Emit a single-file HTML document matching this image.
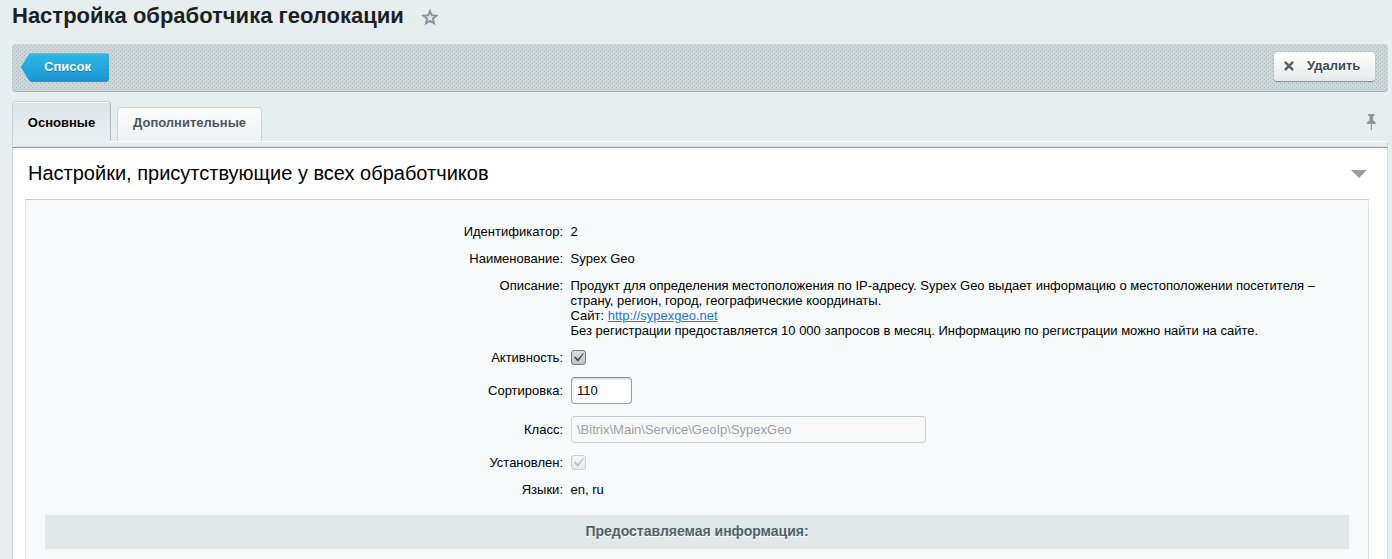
<!DOCTYPE html>
<html lang="ru">
<head>
<meta charset="utf-8">
<title>Настройка обработчика геолокации</title>
<style>
*{box-sizing:border-box;margin:0;padding:0}
html,body{width:1392px;height:559px;overflow:hidden}
body{background:#e7eef0;font-family:"Liberation Sans",Arial,sans-serif;font-size:13px;color:#000;position:relative}
.abs{position:absolute}
h1{position:absolute;left:12px;top:3px;font-size:22px;line-height:26px;font-weight:bold;color:#1c1f26;white-space:nowrap;letter-spacing:0}
.star{position:absolute;left:421px;top:8px;width:18px;height:18px}
.toolbar{position:absolute;left:12px;top:44px;width:1376px;height:48px;border-radius:4px;overflow:hidden;background:#cdd7da;border-bottom:1px solid #a5b0b4}
.toolbar svg{position:absolute;left:0;top:0}
.btn-list{position:absolute;left:21px;top:53px;width:88px;height:29px}
.btn-list span{position:absolute;left:0;top:0;width:100%;height:100%;line-height:27px;text-align:center;color:#fff;font-weight:bold;font-size:13px;padding-left:5px;text-shadow:0 1px 0 rgba(3,95,143,.6)}
.btn-del{position:absolute;left:1274px;top:52px;width:101px;height:29px;border-radius:4px;background:linear-gradient(#ffffff,#e4eaec);box-shadow:0 1px 1px rgba(0,0,0,.3),0 0 0 1px rgba(0,0,0,.04);color:#3f4b54;font-weight:bold;font-size:13px;line-height:29px;text-shadow:0 1px 0 #fff}
.btn-del b{position:absolute;left:33px;top:-1px;font-weight:bold}
.btn-del svg{position:absolute;left:10px;top:9px}
.tab1{position:absolute;left:12px;top:101px;width:99px;height:40px;border-radius:4px 4px 0 0;background:linear-gradient(#dbe3e6,#e9eff1);border:1px solid #cbd3d7;border-right-color:#b3bdc1;border-bottom:none;box-shadow:inset 0 1px 0 #fbfcfc;font-weight:bold;font-size:13px;color:#000;text-align:center;line-height:41px;text-shadow:0 1px 0 #fff}
.tab2{position:absolute;left:117px;top:107px;width:145px;height:34px;border-radius:4px 4px 0 0;background:linear-gradient(#fbfcfc,#eef2f3);border:1px solid #cdd5d8;border-bottom:none;font-weight:bold;font-size:13px;color:#4a5560;text-align:center;line-height:29px;text-shadow:0 1px 0 #fff}
.tabline{position:absolute;left:12px;top:141px;width:1376px;height:6px;background:#e9eff1;border-left:1px solid #cbd3d7;border-right:1px solid #cbd3d7}
.tabhl{position:absolute;left:110px;top:141px;width:1278px;height:1px;background:#fff}
.tabdark{position:absolute;left:12px;top:146px;width:1376px;height:2px;background:linear-gradient(#d6dde0 50%,#98a2a6 50%)}
.content{position:absolute;left:12px;top:148px;width:1376px;height:420px;background:#fff;border-left:1px solid #ccd4d8;border-right:1px solid #d3dadd}
.sect{position:absolute;left:28px;top:160px;font-size:20px;line-height:26px;color:#000;white-space:nowrap}
.tri{position:absolute;left:1351px;top:170px;width:0;height:0;border-left:8.5px solid transparent;border-right:8.5px solid transparent;border-top:8px solid #969fa3}
.panel{position:absolute;left:25px;top:199px;width:1344px;height:380px;background:#f5f9f9;border:1px solid #dbe3e7;border-top-color:#c4cfd4;box-shadow:inset 0 1px 0 #fafcfc}
.row{position:absolute;left:0;height:16px;line-height:16px;font-size:13px;white-space:nowrap}
.lab{position:absolute;right:829px;text-align:right;line-height:16px;white-space:nowrap;color:#000}
.val{position:absolute;left:570.5px;line-height:15px;white-space:nowrap;color:#000}
a{color:#2675d7;text-decoration:underline}
.cb{position:absolute;left:571px;width:15px;height:15px;border-radius:3px;border:1px solid #727c82;background:linear-gradient(#dcdfe1,#bcc1c4);box-shadow:0 0 0 1px rgba(255,255,255,.7)}
.cb.dis{border-color:#c9cfd2;background:linear-gradient(#f2f4f5,#e7eaeb)}
.inp{position:absolute;left:571px;top:377px;width:61px;height:27px;border:1px solid #949ea7;border-top-color:#848e98;border-radius:4px;background:#fff;box-shadow:inset 0 1px 2px rgba(180,188,191,.7);font-size:13px;line-height:26px;padding-left:5px;color:#000}
.inp2{position:absolute;left:571px;top:416px;width:355px;height:27px;border:1px solid #cbd2d8;border-top-color:#c4cbd2;border-radius:4px;background:#f7f9f9;font-size:13px;line-height:25px;padding-left:5px;color:#9a9fa2}
.head{position:absolute;left:45px;top:515px;width:1304px;height:34px;background:#e0e8ea;text-align:center;font-weight:bold;font-size:14px;line-height:33px;color:#4b6267;text-shadow:0 1px 0 #fff}
</style>
</head>
<body>
<h1>Настройка обработчика геолокации</h1>
<svg class="star" viewBox="0 0 18 18"><path d="M9 3l1.800 4.300 4.500.400-3.400 3 1 4.500L9 12.800l-3.900 2.400 1-4.500-3.400-3 4.500-.400z" fill="none" stroke="#8d95a1" stroke-width="2" stroke-linejoin="miter"/></svg>

<div class="toolbar"><svg width="1376" height="48" shape-rendering="crispEdges"><defs><pattern id="dots" x="0" y="0" width="4" height="4" patternUnits="userSpaceOnUse"><rect x="2" y="1" width="1" height="1" fill="#adb7bb"/><rect x="0" y="3" width="1" height="1" fill="#adb7bb"/></pattern></defs><rect width="1376" height="48" fill="url(#dots)"/></svg></div>
<div class="btn-list">
<svg class="abs" style="left:0;top:0" width="88" height="30" viewBox="0 0 88 30"><defs><linearGradient id="g1" x1="0" y1="0" x2="0" y2="1"><stop offset="0" stop-color="#2bb7e4"/><stop offset="1" stop-color="#1d95d4"/></linearGradient></defs>
<path d="M10.300 29.300H85.500a2.500 2.500 0 0 0 2.300-1.500H8.300z" fill="#7f97a4" opacity=".55"/>
<path d="M10.300 0H85.500a2.500 2.500 0 0 1 2.500 2.500V26a2.500 2.500 0 0 1-2.500 2.500H10.300a3 3 0 0 1-2.400-1.200L0.300 15a1.200 1.200 0 0 1 0-1.500L7.900 1.200A3 3 0 0 1 10.300 0z" fill="url(#g1)"/>
<path d="M10 0.500H86" stroke="#4ccbf0" stroke-width="1" opacity=".85"/>
<path d="M10 28H86" stroke="#1783bf" stroke-width="1" opacity=".9"/></svg>
<span>Список</span></div>
<div class="btn-del"><svg width="10" height="10" viewBox="0 0 10 10"><path d="M0.900 0.900l8.200 8.200M9.100 0.900l-8.200 8.200" stroke="#596167" stroke-width="2.500"/></svg><b>Удалить</b></div>

<div class="tabline"></div><div class="tabhl"></div><div class="tabdark"></div>
<div class="tab1">Основные</div>
<div class="tab2">Дополнительные</div>
<svg class="abs" style="left:1366px;top:113px" width="12" height="19" viewBox="0 0 12 19"><path d="M2.200 1h6.300v2h-1.300v4.600c1.600.500 2.500 1.600 2.500 3.300H1c0-1.700.900-2.800 2.500-3.300V3H2.200z" fill="#8e979b"/><path d="M5.400 10.500v6.500" stroke="#8e979b" stroke-width="1.100"/></svg>

<div class="content"></div>
<div class="sect">Настройки, присутствующие у всех обработчиков</div>
<div class="tri"></div>
<div class="panel"></div>

<div class="lab" style="top:224px">Идентификатор:</div><div class="val" style="top:224px">2</div>
<div class="lab" style="top:251px">Наименование:</div><div class="val" style="top:251px">Sypex Geo</div>
<div class="lab" style="top:278px">Описание:</div>
<div class="val" style="top:278px">Продукт для определения местоположения по IP-адресу. Sypex Geo выдает информацию о местоположении посетителя –<br>страну, регион, город, географические координаты.<br>Сайт: <a>http://sypexgeo.net</a><br>Без регистрации предоставляется 10 000 запросов в месяц. Информацию по регистрации можно найти на сайте.</div>
<div class="lab" style="top:350px">Активность:</div>
<div class="cb" style="top:350px"><svg class="abs" style="left:1px;top:1px" width="11" height="11" viewBox="0 0 11 11"><path d="M0.900 5.300L2.300 4.400L4.800 6.900L10.200 1.100L10.900 1.600L5.300 9.300H4.500z" fill="#434c51"/></svg></div>
<div class="lab" style="top:383px">Сортировка:</div>
<div class="inp">110</div>
<div class="lab" style="top:422px">Класс:</div>
<div class="inp2">\Bitrix\Main\Service\GeoIp\SypexGeo</div>
<div class="lab" style="top:455px">Установлен:</div>
<div class="cb dis" style="top:455px"><svg class="abs" style="left:1px;top:1px" width="11" height="11" viewBox="0 0 11 11"><path d="M0.900 5.300L2.300 4.400L4.800 6.900L10.200 1.100L10.900 1.600L5.300 9.300H4.500z" fill="#b9bfc2"/></svg></div>
<div class="lab" style="top:482px">Языки:</div><div class="val" style="top:482px">en, ru</div>

<div class="head">Предоставляемая информация:</div>
</body>
</html>
